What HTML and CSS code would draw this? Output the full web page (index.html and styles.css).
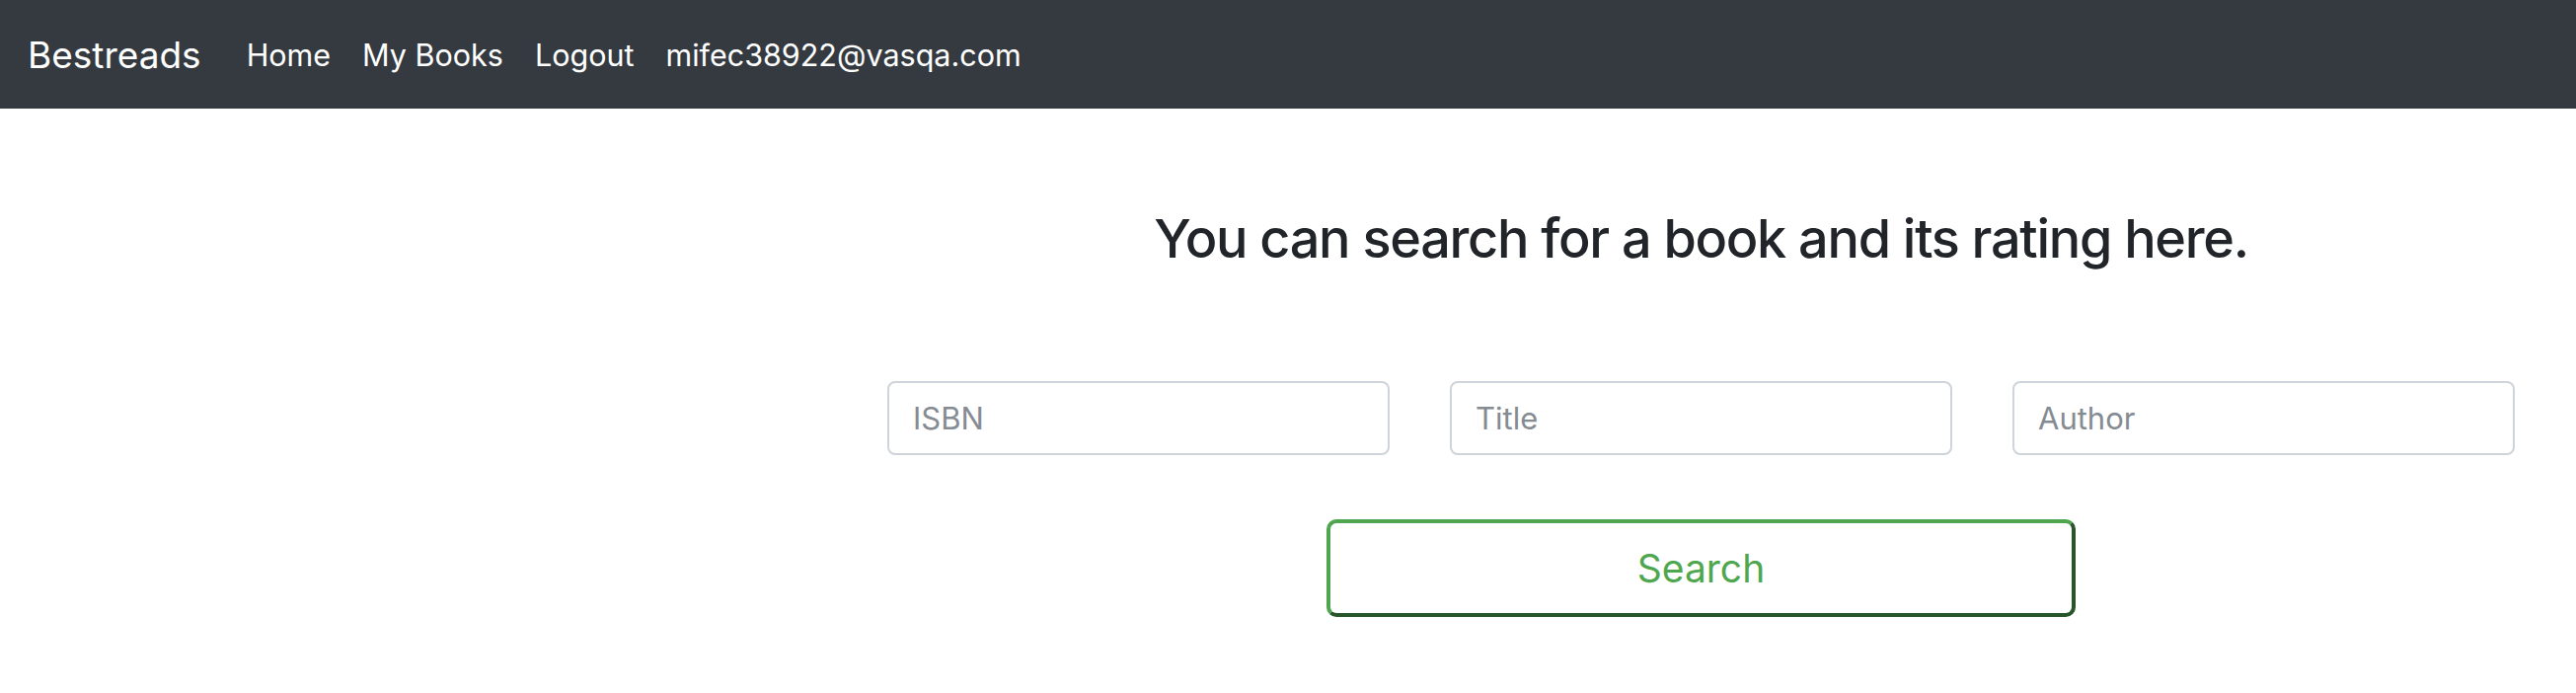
FILE: index.html
```html
<!DOCTYPE html>
<html lang="en">
<head>
<meta charset="utf-8">
<title>Bestreads</title>
<link rel="stylesheet" href="styles.css">
</head>
<body>
<nav class="navbar">
  <a class="brand" href="#">Bestreads</a>
  <ul class="nav">
    <li><a class="nav-link" href="#">Home</a></li>
    <li><a class="nav-link" href="#">My Books</a></li>
    <li><a class="nav-link" href="#">Logout</a></li>
    <li><a class="nav-link" href="#">mifec38922@vasqa.com</a></li>
  </ul>
</nav>
<main class="main">
  <h1 class="title">You can search for a book and its rating here.</h1>
  <form class="search">
    <div class="fields">
      <input class="field" type="text" placeholder="ISBN">
      <input class="field" type="text" placeholder="Title">
      <input class="field" type="text" placeholder="Author">
    </div>
    <button class="btn" type="button">Search</button>
  </form>
</main>
</body>
</html>
```
FILE: styles.css
```css
* { box-sizing: border-box; }
html, body { margin: 0; padding: 0; }
body {
  font-family: Inter, "Liberation Sans", Arial, sans-serif;
  background: #fff;
  color: #212529;
}
.navbar {
  height: 110px;
  background: #343a40;
  display: flex;
  align-items: center;
  padding: 0 28px;
}
.brand {
  color: #fff;
  text-decoration: none;
  font-size: 37px;
  margin-right: 30px;
}
.nav {
  list-style: none;
  margin: 0;
  padding: 0;
  display: flex;
}
.nav-link {
  display: block;
  color: #fff;
  text-decoration: none;
  font-size: 30.5px;
  padding: 0 16px;
}
.main {
  width: 1649px;
  margin-left: 899px;
  padding-top: 97px;
}
.title {
  margin: 0;
  text-align: center;
  font-size: 54px;
  font-weight: 500;
  line-height: 70px;
  letter-spacing: -1.3px;
}
.search {
  margin-top: 109px;
}
.fields {
  display: flex;
  gap: 61px;
}
.field {
  flex: 1 1 0;
  min-width: 0;
  width: 0;
  height: 75px;
  border: 2px solid #ced4da;
  border-radius: 8px;
  padding: 0 24px;
  font-family: inherit;
  font-size: 31px;
  color: #495057;
  background: #fff;
}
.field::placeholder { color: #858b92; }
.btn {
  display: block;
  width: 759px;
  height: 99px;
  margin: 65px auto 0;
  background: #fff;
  border: 4px solid;
  border-color: #4fa64f #27562a #27562a #4fa64f;
  border-radius: 10px;
  color: #4ea74e;
  font-family: inherit;
  font-size: 39px;
}
```
